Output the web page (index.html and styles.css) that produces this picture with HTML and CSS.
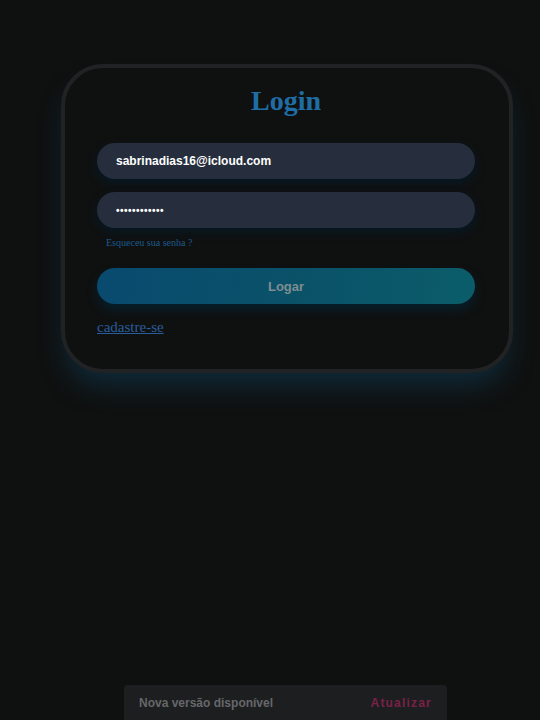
FILE: index.html
```html
<!DOCTYPE html>
<html lang="pt-BR">
<head>
<meta charset="utf-8">
<title>Login</title>
<link rel="stylesheet" href="styles.css">
</head>
<body>
<main class="page">
  <form class="card">
    <h1 class="title">Login</h1>
    <div class="field">sabrinadias16@icloud.com</div>
    <div class="field field-pass">••••••••••••</div>
    <a class="forgot" href="#">Esqueceu sua senha ?</a>
    <button class="btn" type="button">Logar</button>
    <a class="signup" href="#">cadastre-se</a>
  </form>
</main>
<div class="toast">
  <span class="toast-text">Nova versão disponível</span>
  <span class="toast-action">Atualizar</span>
</div>
</body>
</html>
```
FILE: styles.css
```css
html, body {
  margin: 0;
  padding: 0;
  background: #0f1111;
  height: 100%;
}
.page {
  padding-top: 64px;
  padding-left: 61px;
}
.card {
  box-sizing: border-box;
  width: 452px;
  border: 4px solid #202224;
  border-radius: 42px;
  background: #0f1111;
  padding: 15px 34px 33px 32px;
  display: flex;
  flex-direction: column;
  align-items: flex-start;
  box-shadow: 0 18px 26px -6px rgba(16, 62, 90, 0.55);
}
.title {
  align-self: stretch;
  text-align: center;
  margin: 0 0 24px 0;
  font-family: "Liberation Serif", serif;
  font-size: 28px;
  line-height: 36px;
  font-weight: bold;
  color: #1f6da5;
}
.field {
  box-sizing: border-box;
  width: 378px;
  height: 36px;
  border-radius: 18px;
  background: #262e3d;
  padding-left: 19px;
  display: flex;
  align-items: center;
  font-family: "Liberation Sans", Arial, sans-serif;
  font-weight: bold;
  font-size: 12px;
  color: #ffffff;
  box-shadow: 0 4px 8px rgba(0, 28, 45, 0.7);
}
.field-pass {
  margin-top: 13px;
  font-size: 10px;
  letter-spacing: 0.5px;
}
.forgot {
  margin: 9px 0 0 9px;
  font-family: "Liberation Serif", serif;
  font-size: 10px;
  line-height: 12px;
  color: #1b5a8c;
  text-decoration: none;
}
.btn {
  margin-top: 19px;
  width: 378px;
  height: 36px;
  border: 0;
  border-radius: 18px;
  background: linear-gradient(100deg, #094a6f 0%, #0a5268 55%, #0b5d6a 100%);
  font-family: "Liberation Sans", Arial, sans-serif;
  font-weight: bold;
  font-size: 13px;
  color: #7e8d92;
  box-shadow: 0 6px 10px rgba(0, 40, 60, 0.6);
  padding: 0;
}
.signup {
  margin-top: 14px;
  font-family: "Liberation Serif", serif;
  font-size: 15px;
  line-height: 18px;
  color: #2a5c9c;
  text-decoration: underline;
}
.toast {
  position: fixed;
  left: 124px;
  bottom: -10px;
  box-sizing: border-box;
  width: 323px;
  height: 45px;
  background: #1d1e20;
  border-radius: 4px;
  padding: 0 15px 10px 15px;
  display: flex;
  justify-content: space-between;
  align-items: center;
  font-family: "Liberation Sans", Arial, sans-serif;
  font-size: 12px;
  font-weight: bold;
}
.toast-text {
  color: #666769;
}
.toast-action {
  color: #7b2145;
  letter-spacing: 1.2px;
}
```
